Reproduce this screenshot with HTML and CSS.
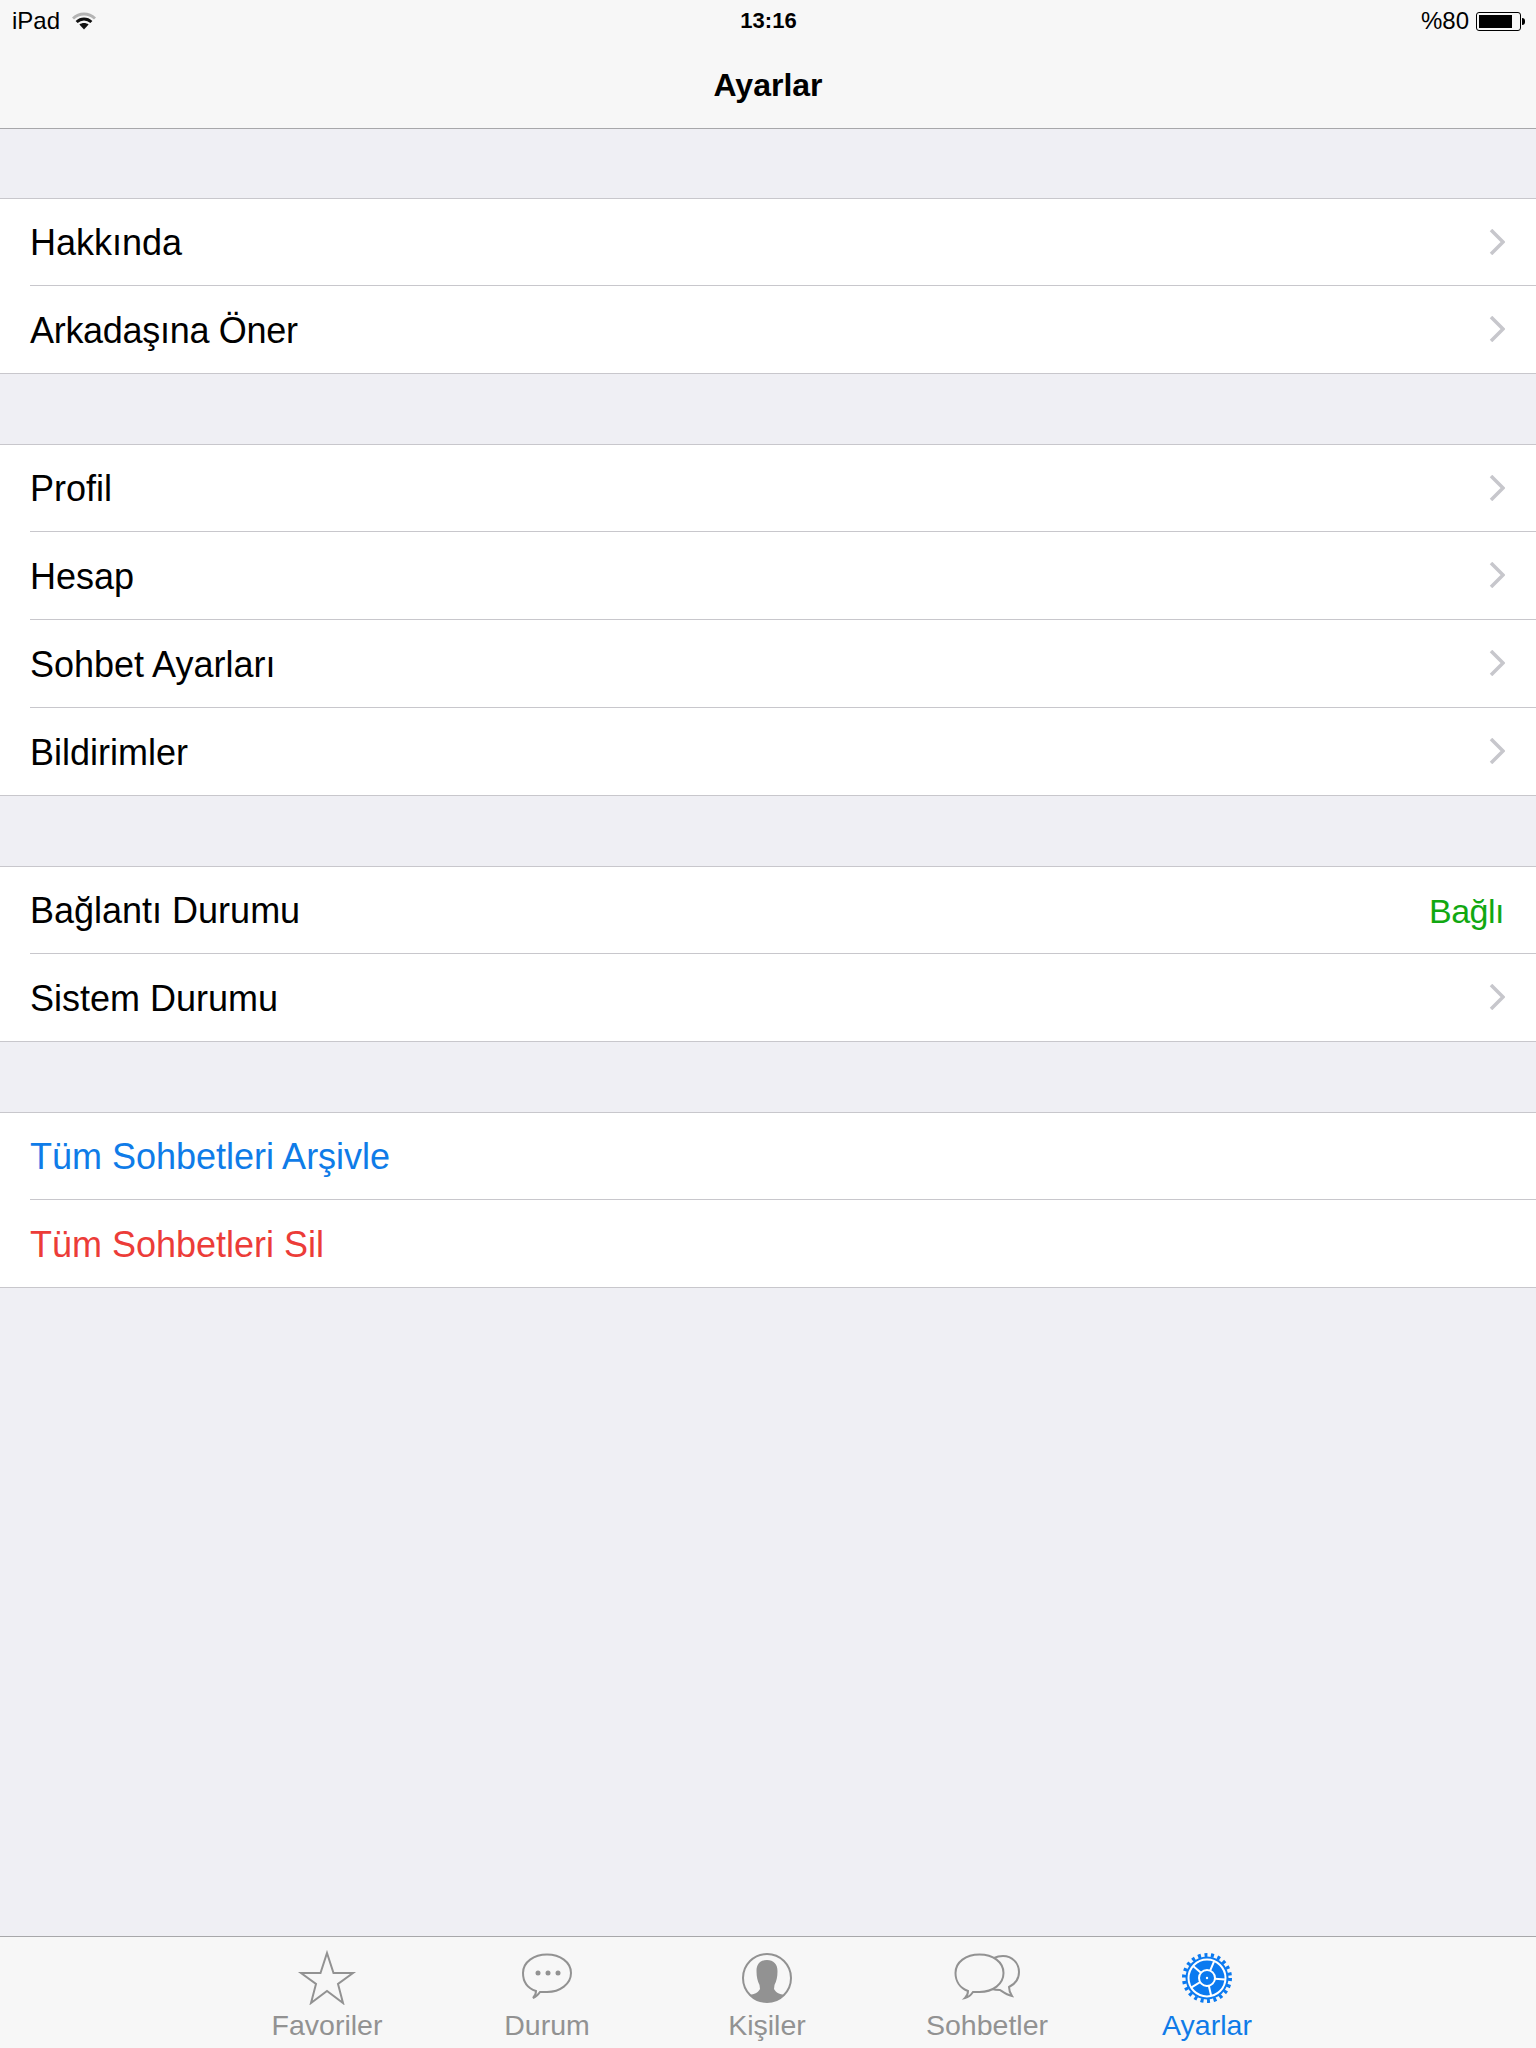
FILE: index.html
```html
<!DOCTYPE html>
<html lang="tr">
<head>
    <meta charset="UTF-8">
    <meta name="viewport" content="width=device-width, initial-scale=1.0">
    <title>Ayarlar</title>
    <link rel="stylesheet" href="styles.css">
</head>
<body>
    <header class="top-bar">
        <div class="status-bar">
            <div class="status-left">
                <span>iPad</span>
                <svg class="wifi" width="24" height="18" viewBox="0 0 24 18">
                    <path d="M1 6.500C7.500 .5 16.500 .5 23 6.500" fill="none" stroke="#b4b4b4" stroke-width="3"/>
                    <path d="M4.600 10C9 6 15 6 19.400 10" fill="none" stroke="#111" stroke-width="3"/>
                    <path d="M7.400 12.400C10 10.400 14 10.400 16.600 12.400L12 17.500Z" fill="#111"/>
                </svg>
            </div>
            <div class="status-time">13:16</div>
            <div class="status-right">
                <span>%80</span>
                <div class="battery"><div class="battery-level"></div></div>
                <div class="battery-cap"></div>
            </div>
        </div>
        <div class="nav-title">Ayarlar</div>
    </header>

    <main class="settings">
        <section class="group">
            <div class="row"><span>Hakkında</span><svg class="chevron" width="16" height="26" viewBox="0 0 16 26"><path d="M2 1L14 13L2 25" /></svg></div>
            <div class="row"><span class="tight">Arkadaşına Öner</span><svg class="chevron" width="16" height="26" viewBox="0 0 16 26"><path d="M2 1L14 13L2 25" /></svg></div>
        </section>
        <section class="group">
            <div class="row"><span>Profil</span><svg class="chevron" width="16" height="26" viewBox="0 0 16 26"><path d="M2 1L14 13L2 25" /></svg></div>
            <div class="row"><span>Hesap</span><svg class="chevron" width="16" height="26" viewBox="0 0 16 26"><path d="M2 1L14 13L2 25" /></svg></div>
            <div class="row"><span>Sohbet Ayarları</span><svg class="chevron" width="16" height="26" viewBox="0 0 16 26"><path d="M2 1L14 13L2 25" /></svg></div>
            <div class="row"><span>Bildirimler</span><svg class="chevron" width="16" height="26" viewBox="0 0 16 26"><path d="M2 1L14 13L2 25" /></svg></div>
        </section>
        <section class="group">
            <div class="row"><span>Bağlantı Durumu</span><span class="connected">Bağlı</span></div>
            <div class="row"><span>Sistem Durumu</span><svg class="chevron" width="16" height="26" viewBox="0 0 16 26"><path d="M2 1L14 13L2 25" /></svg></div>
        </section>
        <section class="group">
            <div class="row archive"><span>Tüm Sohbetleri Arşivle</span></div>
            <div class="row delete"><span>Tüm Sohbetleri Sil</span></div>
        </section>
    </main>

    <nav class="tab-bar">
        <div class="tab">
            <svg class="tab-icon" width="60" height="56" viewBox="0 0 60 56">
                <path d="M30 4L36.500 24H56L41 35L46 54L30 42L14 54L19 35L4 24H23.500Z" fill="none" stroke="#929292" stroke-width="2"/>
            </svg>
            <span>Favoriler</span>
        </div>
        <div class="tab">
            <svg class="tab-icon" width="60" height="56" viewBox="0 0 60 56">
                <path d="M16 49C18 47 19 45 19 42C10 39 6 32 6 24C6 13 17 5.500 30 5.500C43 5.500 54 13 54 24C54 35 43 43 30 43C27 43 25 43 23 43C21 46 19 48 16 49Z" fill="none" stroke="#929292" stroke-width="2"/>
                <circle cx="21" cy="24" r="2.500" fill="#929292"/>
                <circle cx="31" cy="24" r="2.500" fill="#929292"/>
                <circle cx="41" cy="24" r="2.500" fill="#929292"/>
            </svg>
            <span>Durum</span>
        </div>
        <div class="tab">
            <svg class="tab-icon" width="60" height="56" viewBox="0 0 60 56">
                <circle cx="30" cy="29" r="24" fill="none" stroke="#929292" stroke-width="2"/>
                <path d="M30 11C36.500 11 40.500 15 40.500 22C40.500 28 39.500 32 37.500 36L37 40C39 44 43 45 47 46A24 24 0 0 1 13 46C17 45 21 44 23 40L22.500 36C20.500 32 19.500 28 19.500 22C19.500 15 23.500 11 30 11Z" fill="#929292"/>
            </svg>
            <span>Kişiler</span>
        </div>
        <div class="tab">
            <svg class="tab-icon" width="72" height="56" viewBox="0 0 72 56">
                <path d="M14 49C16 47 17 45 17 42C9 39 4.500 32 4.500 24C4.500 13 15 5.500 28.500 5.500C42 5.500 52.500 13 52.500 24C52.500 35 42 43 28.500 43C26 43 24 43 22 43C20 46 18 48 14 49Z" fill="none" stroke="#929292" stroke-width="2"/>
                <path d="M43 9C46 7.500 49 7 52 7C61 7 68 14 68 23C68 30 64 35 58 38C58 41 59 44 61 47C56 46 52 43 49 41C46 41 44 41 41 40" fill="none" stroke="#929292" stroke-width="2"/>
            </svg>
            <span>Sohbetler</span>
        </div>
        <div class="tab active">
            <svg class="tab-icon" width="60" height="56" viewBox="0 0 60 56">
                <circle cx="30" cy="29" r="23" fill="none" stroke="#0b7af0" stroke-width="4" stroke-dasharray="3 3.570"/>
                <circle cx="30" cy="29" r="21.500" fill="#0b7af0"/>
                <circle cx="30" cy="29" r="18.500" fill="none" stroke="#fff" stroke-width="2"/>
                <circle cx="30" cy="29" r="8" fill="none" stroke="#fff" stroke-width="2"/>
                <circle cx="30" cy="29" r="1.200" fill="#fff"/>
                <path transform="rotate(5 30 29)" d="M38 29H48M32.500 36.600L35.600 46.100M23.500 33.700L15.400 39.600M23.500 24.300L15.400 18.400M32.500 21.400L35.600 11.900" stroke="#fff" stroke-width="2"/>
            </svg>
            <span>Ayarlar</span>
        </div>
    </nav>
</body>
</html>
```

FILE: styles.css
```css
html, body {
    margin: 0;
    height: 100%;
}
body {
    font-family: "Liberation Sans", Arial, sans-serif;
    height: 2048px;
    display: flex;
    flex-direction: column;
    background-color: #efeff4;
    color: #000;
    overflow: hidden;
}
.top-bar {
    background-color: #f7f7f7;
    border-bottom: 1px solid #a7a7aa;
    height: 128px;
    flex: none;
}
.status-bar {
    height: 40px;
    box-sizing: border-box;
    display: grid;
    grid-template-columns: 1fr auto 1fr;
    align-items: center;
    padding: 2px 11px 0 12px;
    font-size: 24px;
}
.status-left {
    display: flex;
    align-items: center;
    gap: 12px;
}
.status-time {
    font-weight: bold;
    font-size: 22px;
}
.status-right {
    display: flex;
    align-items: center;
    justify-content: flex-end;
}
.battery {
    width: 45px;
    height: 19px;
    box-sizing: border-box;
    margin-left: 7px;
    padding: 2px;
    border: 1px solid #000;
    border-radius: 3px;
}
.battery-level {
    width: 33px;
    height: 100%;
    background-color: #000;
}
.battery-cap {
    width: 3px;
    height: 7px;
    margin-left: 1px;
    background-color: #000;
    border-radius: 0 3px 3px 0;
}
.nav-title {
    height: 88px;
    line-height: 90px;
    text-align: center;
    font-size: 32px;
    font-weight: bold;
}
.settings {
    flex: 1;
    padding-top: 69px;
}
.group {
    background-color: #fff;
    border-top: 1px solid #c8c7cc;
    border-bottom: 1px solid #c8c7cc;
    margin-bottom: 70px;
}
.row {
    height: 88px;
    box-sizing: border-box;
    margin-left: 30px;
    padding: 2px 31px 0 0;
    display: flex;
    align-items: center;
    justify-content: space-between;
    font-size: 36px;
    border-bottom: 1px solid #c8c7cc;
}
.row:first-child {
    height: 87px;
}
.row:last-child {
    height: 87px;
    border-bottom: none;
}
.tight {
    letter-spacing: -0.3px;
}
.chevron {
    display: block;
    margin-bottom: 3px;
}
.chevron path {
    fill: none;
    stroke: #c7c7cc;
    stroke-width: 3.500;
}
.connected {
    color: #11a811;
    font-size: 34px;
    letter-spacing: -0.5px;
    margin-right: 1px;
}
.archive {
    color: #0f7ce8;
}
.delete {
    color: #ec3c38;
}
.tab-bar {
    flex: none;
    height: 112px;
    box-sizing: border-box;
    background-color: #f7f7f7;
    border-top: 1px solid #a7a7aa;
    display: flex;
    justify-content: center;
    padding: 12px 2px 0 0;
}
.tab {
    width: 220px;
    display: flex;
    flex-direction: column;
    align-items: center;
    color: #929292;
    font-size: 28.500px;
    line-height: 32px;
}
.tab-icon {
    display: block;
    margin-bottom: 4px;
}
.tab.active {
    color: #0f7be8;
}
```
